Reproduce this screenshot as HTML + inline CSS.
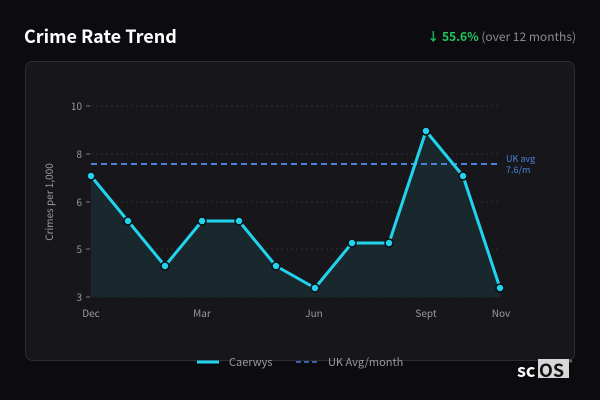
<!DOCTYPE html>
<html><head><style>
html,body{margin:0;padding:0;background:#0c0c10;width:600px;height:400px;overflow:hidden;font-family:"Noto Sans CJK JP","Liberation Sans",sans-serif}
text{font-family:"Noto Sans CJK JP","Liberation Sans",sans-serif}
</style></head><body>
<svg width="600" height="400" xmlns="http://www.w3.org/2000/svg" style="position:absolute;left:0;top:0">
<rect x="0" y="0" width="600" height="400" fill="#0c0c10"/>
<text x="24" y="43" fill="#ffffff" font-size="18" font-weight="bold">Crime Rate Trend</text>
<text x="576" y="41" text-anchor="end" font-size="12" fill="#8a8a90"><tspan fill="#22c55e" font-weight="bold">↓ 55.6%</tspan> (over 12 months)</text>
<rect x="25.5" y="61.5" width="549" height="299" rx="7" fill="#17171b" stroke="#2c2c32"/>
<g stroke="#2e2e33" stroke-dasharray="2,3" stroke-width="1">
<line x1="91" y1="106" x2="500" y2="106"/><line x1="91" y1="154" x2="500" y2="154"/><line x1="91" y1="202" x2="500" y2="202"/><line x1="91" y1="249" x2="500" y2="249"/><line x1="91" y1="297" x2="500" y2="297"/>
</g>
<g stroke="#777" stroke-width="1"><line x1="86" y1="106" x2="90" y2="106"/><line x1="86" y1="154" x2="90" y2="154"/><line x1="86" y1="202" x2="90" y2="202"/><line x1="86" y1="249" x2="90" y2="249"/><line x1="86" y1="297" x2="90" y2="297"/></g>
<g fill="#9a9aa0" font-size="10" text-anchor="end"><text x="82" y="110">10</text><text x="82" y="158">8</text><text x="82" y="206">6</text><text x="82" y="253">5</text><text x="82" y="301">3</text></g>
<text transform="translate(53,202) rotate(-90)" fill="#9a9aa0" font-size="10" text-anchor="middle">Crimes per 1,000</text>
<g fill="#9a9aa0" font-size="10" text-anchor="middle"><text x="91" y="317">Dec</text><text x="202" y="317">Mar</text><text x="314" y="317">Jun</text><text x="426" y="317">Sept</text><text x="501" y="317">Nov</text></g>
<polygon points="91,297 91,176 128,221 165,266 202,221 239,221 276,266 315,288 352,243 389,243 426,131 463,176 500,288 500,297" fill="#1a2a30" opacity="0.9"/>
<line x1="91" y1="164" x2="497" y2="164" stroke="#4a82d8" stroke-width="2" stroke-dasharray="6,4"/>
<text x="506" y="162" fill="#4a82d8" font-size="9">UK avg</text><text x="506" y="173" fill="#4a82d8" font-size="9">7.6/m</text>
<polyline points="91,176 128,221 165,266 202,221 239,221 276,266 315,288 352,243 389,243 426,131 463,176 500,288" fill="none" stroke="#22d3ee" stroke-width="3" stroke-linejoin="round"/>
<g fill="#22d3ee" stroke="#0c0c10" stroke-width="1.5">
<circle cx="91" cy="176" r="4"/><circle cx="128" cy="221" r="4"/><circle cx="165" cy="266" r="4"/><circle cx="202" cy="221" r="4"/><circle cx="239" cy="221" r="4"/><circle cx="276" cy="266" r="4"/><circle cx="315" cy="288" r="4"/><circle cx="352" cy="243" r="4"/><circle cx="389" cy="243" r="4"/><circle cx="426" cy="131" r="4"/><circle cx="463" cy="176" r="4"/><circle cx="500" cy="288" r="4"/>
</g>
<line x1="197" y1="362" x2="219" y2="362" stroke="#22d3ee" stroke-width="3"/>
<text x="229" y="366" fill="#9a9aa0" font-size="11">Caerwys</text>
<line x1="296" y1="362" x2="320" y2="362" stroke="#4a82d8" stroke-width="1.5" stroke-dasharray="5,3"/>
<text x="328" y="366" fill="#9a9aa0" font-size="11">UK Avg/month</text>
<rect x="538" y="359" width="31" height="19" fill="#d8d8d8"/>
<text x="517" y="377" fill="#ffffff" font-size="18" font-weight="bold" font-family="Liberation Sans">sc</text>
<text x="539" y="377" fill="#111" font-size="18" font-weight="bold" font-family="Liberation Sans">OS</text>
<text x="569" y="365" fill="#bbb" font-size="7">®</text>
</svg>
</body></html>
